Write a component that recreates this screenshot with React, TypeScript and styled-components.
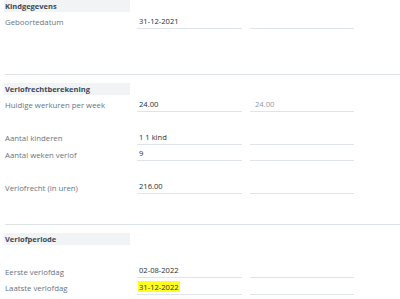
import React from "react";
import styled, { createGlobalStyle } from "styled-components";

const GlobalStyle = createGlobalStyle`
  html, body {
    margin: 0;
    padding: 0;
    background: #ffffff;
  }
  body {
    font-family: "Open Sans", "Liberation Sans", sans-serif;
    -webkit-font-smoothing: antialiased;
  }
`;

const Page = styled.div`
  width: 400px;
  height: 299px;
  overflow: hidden;
  padding-left: 5px;
  box-sizing: border-box;
  display: flex;
  flex-direction: column;
`;

const Section = styled.section<{ $gapAfter?: number }>`
  display: flex;
  flex-direction: column;
  padding-bottom: ${(p) => p.$gapAfter ?? 0}px;
`;

const SectionHeader = styled.div`
  width: 125px;
  height: 12px;
  margin-left: -1px;
  padding-left: 1px;
  background: #f1f3f5;
  color: #3b4958;
  font-size: 7.5px;
  font-weight: 700;
  line-height: 12px;
  white-space: nowrap;
`;

const Divider = styled.hr`
  margin: 0 0 8px 0;
  border: 0;
  height: 1px;
  background: #dde2e6;
`;

const Row = styled.div`
  display: grid;
  grid-template-columns: 124px 105px 104px;
  column-gap: 8px;
  height: 16.5px;
  align-items: end;
`;

const Label = styled.div`
  color: #667483;
  font-size: 7.8px;
  line-height: 10px;
  padding-bottom: 1.5px;
  white-space: nowrap;
`;

const Field = styled.div<{ $muted?: boolean }>`
  height: 12px;
  border-bottom: 1px solid #dfe4e9;
  padding-left: ${(p) => (p.$muted ? 5 : 2)}px;
  color: ${(p) => (p.$muted ? "#8f99a3" : "#2a2f35")};
  font-size: 7.6px;
  line-height: 10px;
  white-space: nowrap;
`;

const Highlight = styled.span`
  background: #ffff1e;
  padding: 0.5px 1px;
  margin-left: -1px;
`;

type RowData = {
  label?: string;
  value?: React.ReactNode;
  extra?: string;
  empty?: boolean;
};

function FormRow({ label, value, extra, empty }: RowData) {
  if (empty) return <Row />;
  return (
    <Row>
      <Label>{label}</Label>
      <Field>{value}</Field>
      <Field $muted>{extra}</Field>
    </Row>
  );
}

export default function App() {
  return (
    <Page>
      <GlobalStyle />
      <Section $gapAfter={45.5}>
        <SectionHeader>Kindgegevens</SectionHeader>
        <FormRow label="Geboortedatum" value="31-12-2021" />
      </Section>
      <Divider />

      <Section $gapAfter={30}>
        <SectionHeader>Verlofrechtberekening</SectionHeader>
        <FormRow label="Huidige werkuren per week" value="24.00" extra="24.00" />
        <FormRow empty />
        <FormRow label="Aantal kinderen" value="1 1 kind" />
        <FormRow label="Aantal weken verlof" value="9" />
        <FormRow empty />
        <FormRow label="Verlofrecht (in uren)" value="216.00" />
      </Section>
      <Divider />

      <Section>
        <SectionHeader>Verlofperiode</SectionHeader>
        <FormRow empty />
        <FormRow label="Eerste verlofdag" value="02-08-2022" />
        <FormRow
          label="Laatste verlofdag"
          value={<Highlight>31-12-2022</Highlight>}
        />
      </Section>
    </Page>
  );
}
